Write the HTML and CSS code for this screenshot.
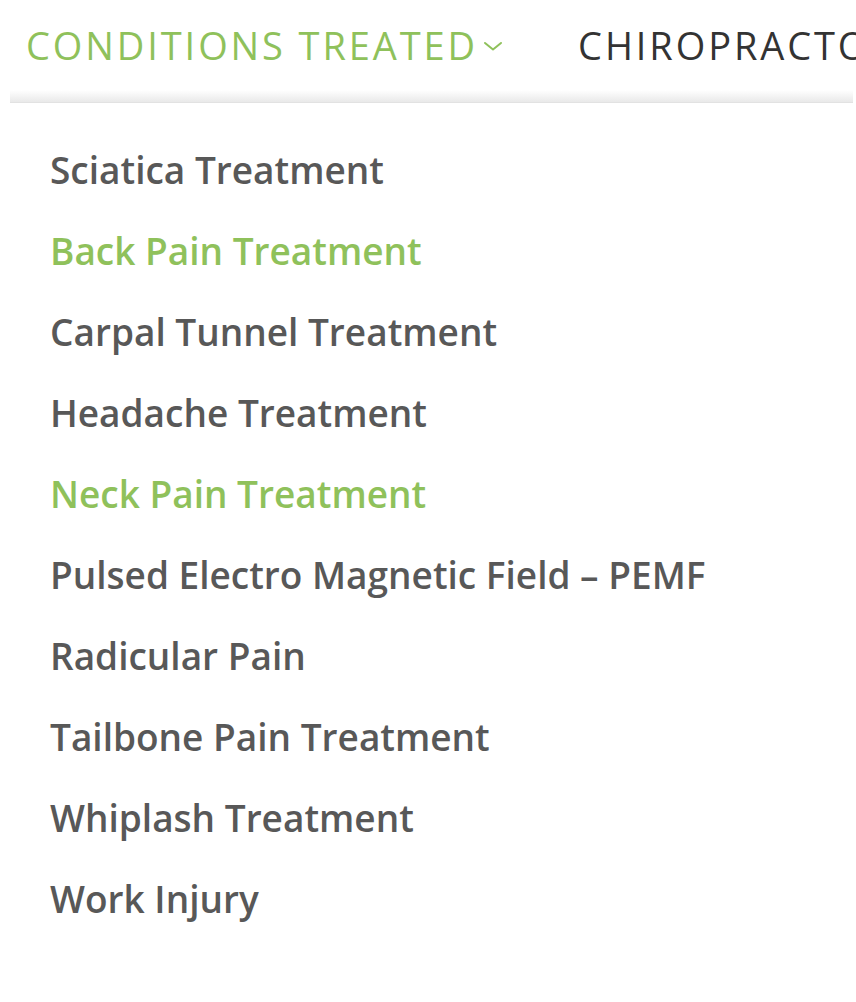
FILE: index.html
```html
<!DOCTYPE html>
<html lang="en">
<head>
<meta charset="utf-8">
<title>Conditions Treated</title>
<link rel="stylesheet" href="styles.css">
</head>
<body>
<header class="nav">
  <a class="nav-item nav-item--active" href="#">CONDITIONS TREATED<svg class="chev" viewBox="0 0 20 10" width="20" height="10"><path d="M2 2 L10 8.5 L18 2" fill="none" stroke="currentColor" stroke-width="2" stroke-linecap="round" stroke-linejoin="round"/></svg></a>
  <a class="nav-item" href="#">CHIROPRACTOR</a>
</header>
<div class="shade"></div>
<ul class="menu">
  <li><a href="#">Sciatica Treatment</a></li>
  <li><a class="hl" href="#">Back Pain Treatment</a></li>
  <li><a href="#">Carpal Tunnel Treatment</a></li>
  <li><a href="#">Headache Treatment</a></li>
  <li><a class="hl" href="#">Neck Pain Treatment</a></li>
  <li><a href="#">Pulsed Electro Magnetic Field – PEMF</a></li>
  <li><a href="#">Radicular Pain</a></li>
  <li><a href="#">Tailbone Pain Treatment</a></li>
  <li><a href="#">Whiplash Treatment</a></li>
  <li><a href="#">Work Injury</a></li>
</ul>
</body>
</html>
```
FILE: styles.css
```css
html, body {
  margin: 0;
  padding: 0;
  background: #fff;
  overflow: hidden;
}
body {
  width: 856px;
  height: 1002px;
}
a { text-decoration: none; }

.nav {
  display: flex;
  align-items: center;
  height: 90px;
  padding-left: 26px;
  gap: 75px;
  white-space: nowrap;
  overflow: hidden;
  font-family: "Open Sans", sans-serif;
  font-size: 38px;
  font-weight: 400;
  letter-spacing: 2.9px;
}
.nav-item {
  color: #333;
  display: flex;
  align-items: center;
  gap: 5px;
}
.nav-item--active { color: #8fc15b; }
.chev { margin-top: 2px; flex: none; }

.shade {
  margin-left: 10px;
  width: 843px;
  height: 12px;
  background: linear-gradient(#ffffff, #e9e9e9);
  border-bottom: 1px solid #e2e2e2;
}

.menu {
  list-style: none;
  margin: 0;
  padding: 44px 0 0 50px;
  font-family: "Open Sans", sans-serif;
  font-weight: 600;
  font-size: 37px;
}
.menu li {
  height: 81px;
  line-height: 46px;
}
.menu a { color: #585858; }
.menu a.hl { color: #8fc15b; }
```
